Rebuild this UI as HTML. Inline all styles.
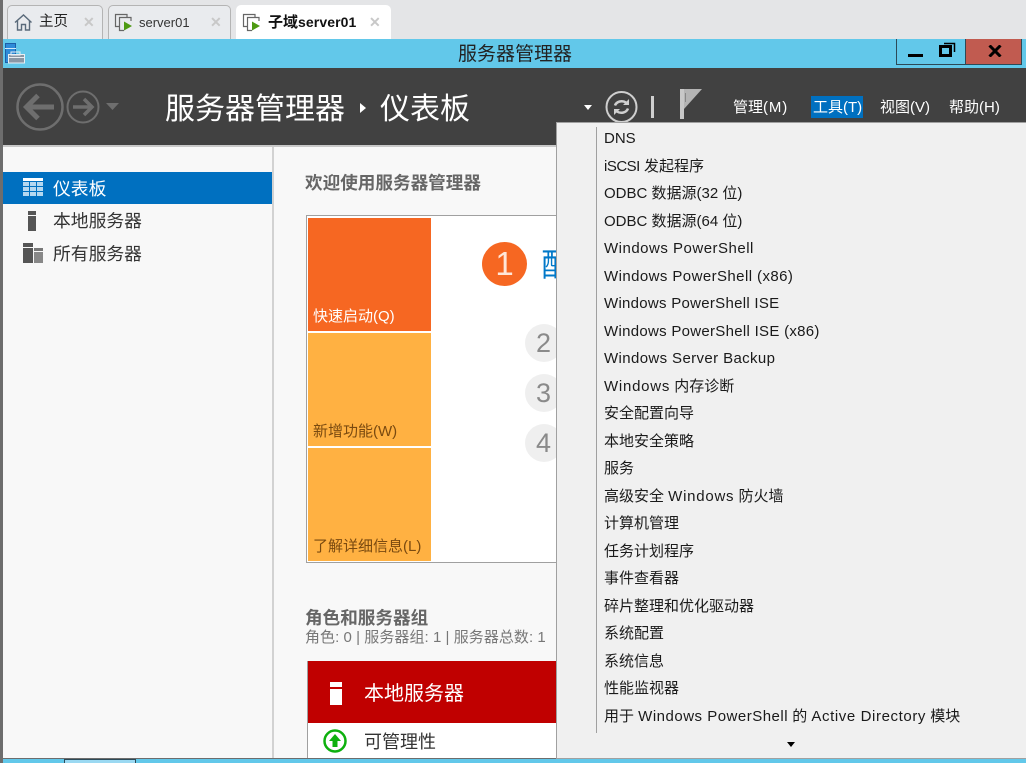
<!DOCTYPE html>
<html><head><meta charset="utf-8"><style>
html,body{margin:0;padding:0;width:1026px;height:763px;overflow:hidden;background:#e4e5e7}
body{position:relative;font-family:"Liberation Sans","Noto Sans CJK SC",sans-serif}
.a{position:absolute}
.t{position:absolute;white-space:nowrap;line-height:1}
.tab{position:absolute;top:5px;height:34px;background:#e9ebee;border:1px solid #b4b4b4;border-bottom:none;border-radius:5px 5px 0 0;box-sizing:border-box}
.x{position:absolute;top:15px;color:#c8c8c8;font-size:14px;line-height:14px;font-weight:bold}
.m{position:absolute;left:604px;font-size:15px;line-height:20px;color:#1a1a1a;white-space:nowrap}
</style></head><body>
<div class="a" style="left:0;top:0;width:3px;height:763px;background:#6d6d6d"></div>

<div class="tab" style="left:7px;width:96px"></div>
<svg class="a" style="left:14px;top:13px" width="19" height="19" viewBox="0 0 19 19" fill="none" stroke="#5a6a7a" stroke-width="1.400"><path d="M1 9.500 9.500 2l8 7.500M3.500 7.500V17H7.500V11.500h4V17h4V7.500"/></svg>
<div class="t" style="left:39px;top:15px;font-size:14.500px;color:#222">主页</div>
<div class="x" style="left:83px">✕</div>

<div class="tab" style="left:108px;width:123px"></div>
<svg class="a" style="left:114px;top:13px" width="20" height="19" viewBox="0 0 20 19" fill="none"><path d="M5 13.500H1.500V1.500H13V4M10 17.500H5.500V4.500H17V8" stroke="#666" stroke-width="1.200"/><path d="M10 8.500v9l8-4.500z" fill="#4d9a12"/></svg>
<div class="t" style="left:139px;top:16px;font-size:13px;color:#333">server01</div>
<div class="x" style="left:210px">✕</div>

<div class="a" style="left:236px;top:5px;width:155px;height:34px;background:#fff;border-radius:5px 5px 0 0"></div>
<svg class="a" style="left:242px;top:13px" width="20" height="19" viewBox="0 0 20 19" fill="none"><path d="M5 13.500H1.500V1.500H13V4M10 17.500H5.500V4.500H17V8" stroke="#666" stroke-width="1.200"/><path d="M10 8.500v9l8-4.500z" fill="#4d9a12"/></svg>
<div class="t" style="left:268px;top:15px;font-size:15px;font-weight:bold;color:#111"><span>子域</span><span style="font-size:14px;letter-spacing:.1px">server01</span></div>
<div class="x" style="left:369px">✕</div>

<div class="a" style="left:3px;top:39px;width:1023px;height:29px;background:#62c8ea"></div>
<svg class="a" style="left:5px;top:43px" width="21" height="21" viewBox="0 0 21 21"><rect x="0.500" y="0.500" width="10" height="19" fill="#2e8bd8" stroke="#1c5fa8"/><rect x="0" y="5" width="11" height="1" fill="#cfe8f8"/><rect x="3.500" y="11.500" width="16" height="8.500" fill="#8a97a5" stroke="#e8eef2"/><rect x="6" y="9" width="9" height="3" fill="none" stroke="#e8eef2"/><rect x="4" y="14" width="15" height="1" fill="#e8eef2"/></svg>
<div class="t" style="left:458px;top:45px;font-size:19px;color:#222">服务器管理器</div>

<div class="a" style="left:896px;top:39px;width:37px;height:26px;border:1px solid #2c4a58;border-top:none;box-sizing:border-box;background:#62c8ea"></div>
<div class="a" style="left:908px;top:54px;width:15px;height:3px;background:#000"></div>
<div class="a" style="left:932px;top:39px;width:34px;height:26px;border:1px solid #2c4a58;border-top:none;border-left:none;box-sizing:border-box;background:#62c8ea"></div>
<svg class="a" style="left:939px;top:42px" width="18" height="16" viewBox="0 0 18 16" fill="none" stroke="#000"><rect x="1.500" y="4.500" width="10" height="9" stroke-width="3"/><path d="M5 1.500H15.500V10" stroke-width="1.500"/></svg>
<div class="a" style="left:966px;top:39px;width:56px;height:26px;border:1px solid #2c4a58;border-top:none;border-left:none;box-sizing:border-box;background:#c15b50"></div>
<svg class="a" style="left:988px;top:45px" width="14" height="12" viewBox="0 0 14 12" stroke="#000" stroke-width="3" fill="none"><path d="M1.500 0.500 12.500 11.500M12.500 0.500 1.500 11.500"/></svg>

<div class="a" style="left:3px;top:68px;width:1023px;height:77px;background:#414141"></div>
<svg class="a" style="left:15px;top:80px" width="108" height="54" viewBox="0 0 108 54" fill="none" stroke="#6e6e6e"><circle cx="25" cy="27" r="22.500" stroke-width="2.500"/><path d="M11 27H39M23 15.500 11.500 27 23 38.500" stroke-width="5"/><circle cx="68" cy="27" r="15.500" stroke-width="2"/><path d="M58 27H77M69 19 77 27 69 35" stroke-width="3.500"/><path d="M91 23H104L97.500 30z" fill="#6e6e6e" stroke="none"/></svg>
<div class="t" style="left:165px;top:95px;font-size:30px;color:#fff">服务器管理器</div>
<div class="a" style="left:360px;top:103px;width:0;height:0;border-left:6px solid #fff;border-top:5px solid transparent;border-bottom:5px solid transparent"></div>
<div class="t" style="left:380px;top:95px;font-size:30px;color:#fff">仪表板</div>
<div class="a" style="left:584px;top:105px;width:0;height:0;border-top:5px solid #fff;border-left:4.500px solid transparent;border-right:4.500px solid transparent"></div>
<svg class="a" style="left:604px;top:90px" width="36" height="34" viewBox="0 0 36 34" fill="none" stroke="#cfcfcf"><circle cx="17.500" cy="17" r="15" stroke-width="2"/><path d="M11 15.500a7 6 0 0 1 11-3M24 18.500a7 6 0 0 1-11 3" stroke-width="2.500"/><path d="M25 9v6h-6zM10 25v-6h6z" fill="#cfcfcf" stroke="none"/></svg>
<div class="a" style="left:651px;top:96px;width:3px;height:22px;background:#cfcfcf"></div>
<svg class="a" style="left:680px;top:89px" width="23" height="31" viewBox="0 0 23 31"><path d="M0 0H4V30H0z" fill="#c8c8c8"/><path d="M4 0H22L4 20z" fill="#b4b4b4"/><path d="M5 4h1v9H5z" fill="#888"/></svg>
<div class="t" style="left:733px;top:100px;font-size:15px;color:#fff"><span>管理</span><span style="letter-spacing:.9px">(M)</span></div>
<div class="a" style="left:811px;top:96px;width:52px;height:22px;background:#0070c0"></div>
<div class="t" style="left:813px;top:100px;font-size:15px;color:#fff">工具(T)</div>
<div class="t" style="left:880px;top:100px;font-size:15px;color:#fff">视图(V)</div>
<div class="t" style="left:949px;top:100px;font-size:15px;color:#fff">帮助(H)</div>

<div class="a" style="left:3px;top:145px;width:1023px;height:613px;background:#f8f8f8"></div>
<div class="a" style="left:3px;top:145px;width:1023px;height:2px;background:#c8c8c8"></div>
<div class="a" style="left:272px;top:147px;width:2px;height:611px;background:#d2d2d2"></div>
<div class="a" style="left:3px;top:172px;width:269px;height:32px;background:#0070c0"></div>
<svg class="a" style="left:23px;top:178px" width="21" height="19" viewBox="0 0 21 19"><rect width="20" height="3" fill="#fff"/><g fill="#b5d8f0"><rect y="4" width="6" height="4"/><rect x="7" y="4" width="6" height="4"/><rect x="14" y="4" width="6" height="4"/><rect y="9" width="6" height="4"/><rect x="7" y="9" width="6" height="4"/><rect x="14" y="9" width="6" height="4"/><rect y="14" width="6" height="4"/><rect x="7" y="14" width="6" height="4"/><rect x="14" y="14" width="6" height="4"/></g></svg>
<div class="t" style="left:53px;top:181px;font-size:17.800px;color:#fff">仪表板</div>
<svg class="a" style="left:28px;top:211px" width="9" height="20"><rect width="8" height="4" fill="#555"/><rect y="5" width="8" height="15" fill="#555"/></svg>
<div class="t" style="left:53px;top:213px;font-size:17.800px;color:#333">本地服务器</div>
<svg class="a" style="left:23px;top:243px" width="21" height="20"><rect width="10" height="4" fill="#555"/><rect y="5" width="10" height="15" fill="#555"/><rect x="11" y="5" width="9" height="3" fill="#777"/><rect x="11" y="9" width="9" height="11" fill="#888"/></svg>
<div class="t" style="left:53px;top:246px;font-size:17.800px;color:#333">所有服务器</div>

<div class="t" style="left:305px;top:175px;font-size:17.600px;font-weight:bold;color:#666">欢迎使用服务器管理器</div>
<div class="a" style="left:306px;top:215px;width:260px;height:348px;background:#fff;border:1px solid #a0a0a0;box-sizing:border-box"></div>
<div class="a" style="left:308px;top:218px;width:123px;height:113px;background:#f66722"></div>
<div class="a" style="left:308px;top:333px;width:123px;height:113px;background:#ffb142"></div>
<div class="a" style="left:308px;top:448px;width:123px;height:113px;background:#ffb142"></div>
<div class="t" style="left:313px;top:309px;font-size:15px;color:#fff">快速启动(Q)</div>
<div class="t" style="left:313px;top:424px;font-size:15px;color:#7a4a10">新增功能(W)</div>
<div class="t" style="left:313px;top:539px;font-size:15px;color:#7a4a10">了解详细信息(L)</div>
<div class="a" style="left:482px;top:242px;width:45px;height:44px;border-radius:50%;background:#f66722"></div>
<div class="t" style="left:482px;top:247px;width:45px;text-align:center;font-size:33px;color:#ffe6d8">1</div>
<div class="t" style="left:541px;top:249px;font-size:32px;color:#0078c8">配</div>
<div class="a" style="left:525px;top:324px;width:38px;height:38px;border-radius:50%;background:#efefef"></div>
<div class="a" style="left:525px;top:374px;width:38px;height:38px;border-radius:50%;background:#efefef"></div>
<div class="a" style="left:525px;top:424px;width:38px;height:38px;border-radius:50%;background:#efefef"></div>
<div class="t" style="left:536px;top:330px;font-size:27px;color:#8a8a8a">2</div>
<div class="t" style="left:536px;top:380px;font-size:27px;color:#8a8a8a">3</div>
<div class="t" style="left:536px;top:430px;font-size:27px;color:#8a8a8a">4</div>

<div class="t" style="left:305px;top:610px;font-size:17.600px;font-weight:bold;color:#666">角色和服务器组</div>
<div class="t" style="left:305px;top:630px;font-size:15px;letter-spacing:.05px;color:#777">角色: 0 | 服务器组: 1 | 服务器总数: 1</div>
<div class="a" style="left:307px;top:661px;width:255px;height:97px;background:#fff;border-left:1px solid #a0a0a0;box-sizing:border-box"></div>
<div class="a" style="left:308px;top:661px;width:254px;height:62px;background:#c00000"></div>
<svg class="a" style="left:330px;top:682px" width="12" height="23"><rect width="12" height="5" fill="#fff"/><rect y="7" width="12" height="16" fill="#fff"/></svg>
<div class="t" style="left:364px;top:684px;font-size:20px;color:#fff">本地服务器</div>
<svg class="a" style="left:322px;top:728px" width="26" height="26" viewBox="0 0 26 26" fill="none"><circle cx="13" cy="13" r="10.500" stroke="#0eb00e" stroke-width="2.500"/><path d="M13 6 19 13H15.500V19H10.500V13H7z" fill="#0eb00e"/></svg>
<div class="t" style="left:364px;top:733px;font-size:18px;color:#333">可管理性</div>

<div class="a" style="left:3px;top:758px;width:1023px;height:5px;background:#62c8ea;border-top:1px solid #6d6d6d;box-sizing:border-box"></div>
<div class="a" style="left:64px;top:759px;width:72px;height:4px;background:#9bd9f2;border:1px solid #2c4a58;border-bottom:none;box-sizing:border-box"></div>

<div class="a" style="left:556px;top:122px;width:470px;height:637px;background:#f0f0f0;border:1px solid #a0a0a0;border-right:none;box-sizing:border-box"></div>
<div class="a" style="left:596px;top:127px;width:1px;height:606px;background:#a0a0a0"></div>
<div class="m" style="top:129px">DNS</div>
<div class="m" style="top:157px"><span style="letter-spacing:-.5px">iSCSI</span> 发起程序</div>
<div class="m" style="top:184px">ODBC 数据源(32 位)</div>
<div class="m" style="top:212px">ODBC 数据源(64 位)</div>
<div class="m" style="top:239px;letter-spacing:.5px">Windows PowerShell</div>
<div class="m" style="top:267px;letter-spacing:.42px">Windows PowerShell (x86)</div>
<div class="m" style="top:294px;letter-spacing:.28px">Windows PowerShell ISE</div>
<div class="m" style="top:322px;letter-spacing:.29px">Windows PowerShell ISE (x86)</div>
<div class="m" style="top:349px;letter-spacing:.38px">Windows Server Backup</div>
<div class="m" style="top:377px"><span style="letter-spacing:.75px">Windows</span> 内存诊断</div>
<div class="m" style="top:404px">安全配置向导</div>
<div class="m" style="top:432px">本地安全策略</div>
<div class="m" style="top:459px">服务</div>
<div class="m" style="top:487px">高级安全 <span style="letter-spacing:.75px">Windows</span> 防火墙</div>
<div class="m" style="top:514px">计算机管理</div>
<div class="m" style="top:542px">任务计划程序</div>
<div class="m" style="top:569px">事件查看器</div>
<div class="m" style="top:597px">碎片整理和优化驱动器</div>
<div class="m" style="top:624px">系统配置</div>
<div class="m" style="top:652px">系统信息</div>
<div class="m" style="top:679px">性能监视器</div>
<div class="m" style="top:707px">用于 <span style="letter-spacing:.5px">Windows PowerShell</span> 的 <span style="letter-spacing:.6px">Active Directory</span> 模块</div>
<div class="a" style="left:787px;top:742px;width:0;height:0;border-top:5px solid #000;border-left:4.500px solid transparent;border-right:4.500px solid transparent"></div>
</body></html>
